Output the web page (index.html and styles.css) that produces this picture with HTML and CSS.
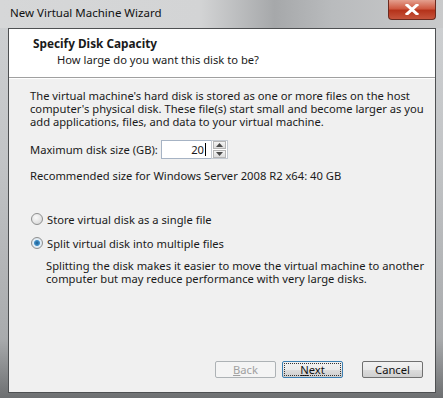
FILE: index.html
```html
<!DOCTYPE html>
<html lang="en">
<head>
<meta charset="utf-8">
<title>New Virtual Machine Wizard</title>
<link rel="stylesheet" href="styles.css">
</head>
<body>
<div class="window">
	<div class="titlebar">
		<span class="title">New Virtual Machine Wizard</span>
		<div class="close">
			<svg width="14" height="11" viewBox="0 0 14 11"><path d="M2 1 L12 10 M12 1 L2 10" stroke="#fff" stroke-width="3" stroke-linecap="square"/></svg>
		</div>
	</div>
	<div class="client">
		<div class="header">
			<div class="head-title">Specify Disk Capacity</div>
			<div class="head-sub">How large do you want this disk to be?</div>
		</div>
		<div class="body">
			<p class="intro">The virtual machine's hard disk is stored as one or more files on the host computer's physical disk. These file(s) start small and become larger as you add applications, files, and data to your virtual machine.</p>
			<div class="size-row">
				<label class="size-label">Maximum disk size (GB):</label>
				<div class="spin-input"><span class="spin-value">20</span><span class="caret"></span></div>
				<div class="spinner">
					<div class="spin-btn"><svg width="7" height="4" viewBox="0 0 7 4"><path d="M0 4 L3.5 0 L7 4 Z" fill="#4a4a4a"/></svg></div>
					<div class="spin-btn"><svg width="7" height="4" viewBox="0 0 7 4"><path d="M0 0 L3.5 4 L7 0 Z" fill="#4a4a4a"/></svg></div>
				</div>
			</div>
			<p class="recommend">Recommended size for Windows Server 2008 R2 x64: 40 GB</p>

			<div class="option">
				<span class="radio"></span>
				<span>Store virtual disk as a single file</span>
			</div>
			<div class="option">
				<span class="radio checked"></span>
				<span>Split virtual disk into multiple files</span>
			</div>
			<p class="option-note">Splitting the disk makes it easier to move the virtual machine to another computer but may reduce performance with very large disks.</p>
		</div>
		<div class="buttons">
			<button class="btn disabled"><u>B</u>ack</button>
			<button class="btn default"><u>N</u>ext</button>
			<button class="btn cancel">Cancel</button>
		</div>
	</div>
</div>
</body>
</html>
```

FILE: styles.css
```css
body {
	margin: 0;
	font-family: "Noto Sans", "Open Sans", sans-serif;
	font-size: 11.2px;
	color: #1a1a1a;
}

.window {
	width: 443px;
	height: 398px;
	display: flex;
	flex-direction: column;
	background: linear-gradient(180deg, #cfd1d3 0%, #c2c4c6 40%, #a9abad 85%, #6d6f71 100%);
	overflow: hidden;
}

.titlebar {
	height: 28px;
	display: flex;
	align-items: flex-start;
	justify-content: space-between;
	background: linear-gradient(90deg, #d6d7d8 0%, #d3d4d5 45%, #a6a8aa 62%, #b9bbbd 75%, #c9cacb 100%);
}
.title {
	margin: 5px 0 0 10px;
	font-size: 11.5px;
	color: #111;
}
.close {
	width: 46px;
	height: 19px;
	margin-right: 7px;
	display: flex;
	align-items: center;
	justify-content: center;
	background: linear-gradient(180deg, #e4a08f 0%, #cf5a42 45%, #b5331b 55%, #c6543c 100%);
	border: 1px solid #6b2a1f;
	border-top: none;
	border-radius: 0 0 4px 4px;
}

.client {
	flex: 1;
	margin: 0 7px 5px 8px;
	display: flex;
	flex-direction: column;
	background: #f0f0f0;
	border: 1px solid #4e5052;
}

.header {
	height: 48px;
	background: #fff;
	border-bottom: 1px solid #a0a0a0;
	box-shadow: 0 1px 0 #fff;
}
.head-title {
	margin: 6px 0 0 24px;
	font-weight: bold;
	font-size: 11.8px;
}
.head-sub {
	margin: 1px 0 0 48px;
}

.body {
	flex: 1;
	padding: 11px 10px 0 21px;
	line-height: 13px;
}
.body p {
	margin: 0;
}

.size-row {
	display: flex;
	align-items: center;
	margin-top: 11px;
	height: 21px;
}
.size-label {
	width: 131px;
	white-space: nowrap;
}
.spin-input {
	width: 50px;
	height: 19px;
	display: flex;
	align-items: center;
	justify-content: flex-end;
	background: #fff;
	border: 1px solid #a6b3c4;
	border-right: none;
	box-sizing: border-box;
	padding-right: 5px;
}
.caret {
	width: 1px;
	height: 13px;
	background: #000;
	margin-left: 1px;
}
.spinner {
	display: flex;
	flex-direction: column;
	gap: 1px;
	height: 19px;
	padding: 0 1px;
	border: 1px solid #c3c9d1;
	box-sizing: border-box;
	background: #fff;
}
.spin-btn {
	width: 13px;
	height: 8px;
	display: flex;
	align-items: center;
	justify-content: center;
	background: linear-gradient(180deg, #f4f4f4, #dcdcdc);
	border: 1px solid #b5b5b5;
	box-sizing: border-box;
}

.recommend {
	margin-top: 9px !important;
}

.option {
	display: flex;
	align-items: center;
	gap: 4px;
	margin-left: 1px;
	height: 14px;
}
.recommend + .option {
	margin-top: 30px;
}
.option + .option {
	margin-top: 10px;
}
.radio {
	width: 12px;
	height: 12px;
	border-radius: 50%;
	border: 1px solid #8e8f8f;
	background: radial-gradient(circle at 40% 35%, #fafafa, #d2d2d2);
	box-sizing: border-box;
}
.radio.checked {
	background: radial-gradient(circle, #1c5a8c 0, #3f8fc8 2.5px, #e2eef8 3.5px, #d9d9d9 100%);
}
.option-note {
	margin: 9px 0 0 16px !important;
}

.buttons {
	display: flex;
	justify-content: flex-end;
	padding: 0 12px 14px 0;
	gap: 6px;
}
.btn {
	height: 17px;
	width: 61px;
	padding: 0;
	font-family: inherit;
	font-size: 11.2px;
	color: #111;
	background: linear-gradient(180deg, #f2f2f2 0%, #ebebeb 50%, #dddddd 51%, #cfcfcf 100%);
	border: 1px solid #707070;
	border-radius: 2px;
	line-height: 13px;
}
.btn.disabled {
	color: #a0a0a0;
	background: #f4f4f4;
	border-color: #adb2b5;
}
.btn.default {
	border-color: #3c7fb1;
	outline: 1px dotted #333;
	outline-offset: -3px;
}
.btn.cancel {
	margin-left: 13px;
}
```
